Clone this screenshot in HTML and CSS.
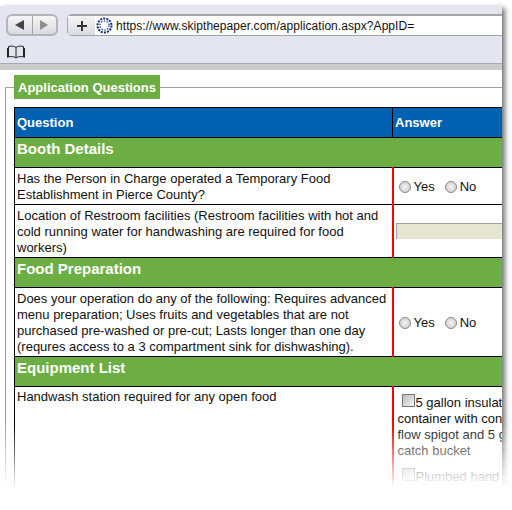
FILE: index.html
```html
<!DOCTYPE html>
<html lang="en">
<head>
  <meta charset="UTF-8">
  <title>Application Questions</title>
  <link rel="stylesheet" href="styles.css">
</head>
<body>
  <div class="window">
    <div class="toolbar">
      <div class="nav-row">
        <div class="nav-btns">
          <span class="nav-btn nav-back"><svg width="10" height="10" viewBox="0 0 10 10"><path d="M0 5 9 0v10z" fill="#444"/></svg></span>
          <span class="nav-btn"><svg width="10" height="10" viewBox="0 0 10 10"><path d="M9 5 1 0v10z" fill="#8f8f8f"/></svg></span>
        </div>
        <div class="address">
          <span class="plus-btn"><svg width="12" height="12" viewBox="0 0 12 12"><path d="M6 1v10M1 6h10" stroke="#333" stroke-width="2"/></svg></span>
          <div class="url">
            <svg class="spinner" width="17" height="17" viewBox="0 0 17 17"><circle cx="8.500" cy="8.500" r="7" fill="none" stroke="#14307c" stroke-width="2" stroke-dasharray="2 1.150"/><circle cx="8.500" cy="8.500" r="4.600" fill="none" stroke="#3f5fa8" stroke-width="1.500" stroke-dasharray="1.500 1.400"/></svg>
            <span>https://www.skipthepaper.com/application.aspx?AppID=</span>
          </div>
        </div>
      </div>
      <div class="bookmarks">
        <svg width="18" height="14" viewBox="0 0 18 14"><path d="M9 2.500C7 .8 4 .8 1.500 1.500V12C4 11.300 7 11.300 9 13c2-1.700 5-1.700 7.500-1V1.500C14 .8 11 .8 9 2.500zM9 2.500V13M.5 12.500V3M17.500 12.500V3" fill="none" stroke="#222" stroke-width="1"/></svg>
      </div>
    </div>
    <div class="greybar"></div>
    <div class="page">
      <fieldset class="questions">
        <legend>Application Questions</legend>
        <table class="qtable">
          <tr class="head">
            <th class="col-q">Question</th>
            <th class="col-a">Answer</th>
          </tr>
          <tr class="section"><td colspan="2">Booth Details</td></tr>
          <tr>
            <td class="q">Has the Person in Charge operated a Temporary Food Establishment in Pierce County?</td>
            <td class="a"><label class="radio"><span class="radio-dot"></span>Yes</label><label class="radio"><span class="radio-dot"></span>No</label></td>
          </tr>
          <tr>
            <td class="q">Location of Restroom facilities (Restroom facilities with hot and cold running water for handwashing are required for food workers)</td>
            <td class="a"><div class="text-input"></div></td>
          </tr>
          <tr class="section"><td colspan="2">Food Preparation</td></tr>
          <tr>
            <td class="q">Does your operation do any of the following: Requires advanced menu preparation; Uses fruits and vegetables that are not purchased pre-washed or pre-cut; Lasts longer than one day (requres access to a 3 compartment sink for dishwashing).</td>
            <td class="a"><label class="radio"><span class="radio-dot"></span>Yes</label><label class="radio"><span class="radio-dot"></span>No</label></td>
          </tr>
          <tr class="section"><td colspan="2">Equipment List</td></tr>
          <tr>
            <td class="q top">Handwash station required for any open food</td>
            <td class="a top">
              <div class="check-item"><span class="check"></span>5 gallon insulated<br>container with continuous<br>flow spigot and 5 gallon<br>catch bucket</div>
              <div class="check-item"><span class="check"></span>Plumbed hand sink</div>
            </td>
          </tr>
        </table>
      </fieldset>
    </div>
  </div>
  <div class="fade"></div>
</body>
</html>
```

FILE: styles.css
```css
html, body {
  margin: 0;
  background: #fff;
}
body {
  position: relative;
  height: 510px;
  overflow: hidden;
  font-family: "Liberation Sans", Arial, sans-serif;
}
.window {
  width: 502px;
  height: 490px;
  margin-top: 6px;
  overflow: hidden;
  background: #fff;
  box-shadow: 3px 2px 5px rgba(0, 0, 0, 0.55);
}
.toolbar {
  height: 58px;
  background: #e3e5f0;
  border-bottom: 1px solid #a9a9b5;
  padding-top: 8px;
  box-sizing: border-box;
}
.nav-row {
  display: flex;
  gap: 9px;
  padding-left: 6px;
}
.nav-btns {
  display: flex;
  width: 52px;
  height: 22px;
  box-sizing: border-box;
  border: 2px solid #b4b4b8;
  border-radius: 6px;
  background: linear-gradient(#f6f6f8, #d9dae0);
}
.nav-btn {
  flex: 1;
  display: flex;
  align-items: center;
  justify-content: center;
}
.nav-back {
  border-right: 1px solid #a5a5a8;
}
.address {
  flex: 1;
  display: flex;
  height: 22px;
  box-sizing: border-box;
  border: 1px solid #a5a5a8;
  border-top-width: 2px;
  border-right: 0;
  border-radius: 5px 0 0 5px;
}
.plus-btn {
  width: 27px;
  display: flex;
  align-items: center;
  justify-content: center;
  background: linear-gradient(#f6f6f8, #d9dae0);
}
.url {
  flex: 1;
  display: flex;
  align-items: center;
  gap: 3px;
  background: #fff;
  font-size: 12px;
  letter-spacing: 0.06px;
  color: #111;
  white-space: nowrap;
}
.spinner {
  margin-left: 1px;
}
.bookmarks {
  padding: 9px 0 0 7px;
  line-height: 0;
}
.greybar {
  height: 6px;
  background: #cbcbcb;
}
.page {
  padding: 5px 0 0 5px;
}
.questions {
  margin: 0;
  padding: 8px 0 0 8px;
  width: 520px;
  box-sizing: border-box;
  border: 0;
  border-top: 1px solid #a0a0a0;
  border-left: 1px solid #a0a0a0;
}
.questions legend {
  padding: 1px 4px 0;
  background: #6cae44;
  color: #fff;
  font-size: 13px;
  font-weight: bold;
  line-height: 23px;
}
.qtable {
  width: 560px;
  table-layout: fixed;
  border-collapse: collapse;
  font-size: 13px;
  line-height: 16px;
  color: #111;
}
.qtable td, .qtable th {
  border: 1px solid #000;
  padding: 2px;
  text-align: left;
}
.head th {
  height: 25px;
  background: #0060b2;
  color: #fff;
}
.col-q {
  width: 373px;
}
.qtable .section td {
  height: 26px;
  padding-top: 1px;
  vertical-align: top;
  background: #6cae44;
  color: #fff;
  font-size: 15px;
  line-height: 20px;
  font-weight: bold;
}
.qtable .q {
  padding: 3px 2px 1px;
  vertical-align: middle;
}
.qtable .a {
  border-left: 2px solid #f00;
  padding-left: 4px;
  vertical-align: middle;
}
.qtable .q.top {
  padding-top: 2px;
  vertical-align: top;
}
.qtable .a.top {
  padding-top: 7px;
  vertical-align: top;
}
.radio {
  display: inline-flex;
  align-items: center;
  gap: 3px;
  margin: 4px 9px 0 1px;
}
.radio-dot {
  width: 10px;
  height: 10px;
  border: 1px solid #8c8c8c;
  border-radius: 50%;
  background: radial-gradient(#f4f4f4, #c4c4c4);
}
.text-input {
  height: 15px;
  margin-left: -2px;
  background: #e6e6d0;
  border-top: 1px solid #a0a0a0;
  border-left: 1px solid #a0a0a0;
}
.check-item {
  margin-bottom: 9px;
}
.check {
  display: inline-block;
  width: 11px;
  height: 11px;
  margin: 0 1px 0 4px;
  vertical-align: 0;
  border: 1px solid #777;
  background: linear-gradient(135deg, #bbb, #f4f4f4);
}
.fade {
  position: absolute;
  left: 0;
  right: 0;
  top: 425px;
  bottom: 0;
  background: linear-gradient(rgba(255, 255, 255, 0), #fff 63px);
}
```
